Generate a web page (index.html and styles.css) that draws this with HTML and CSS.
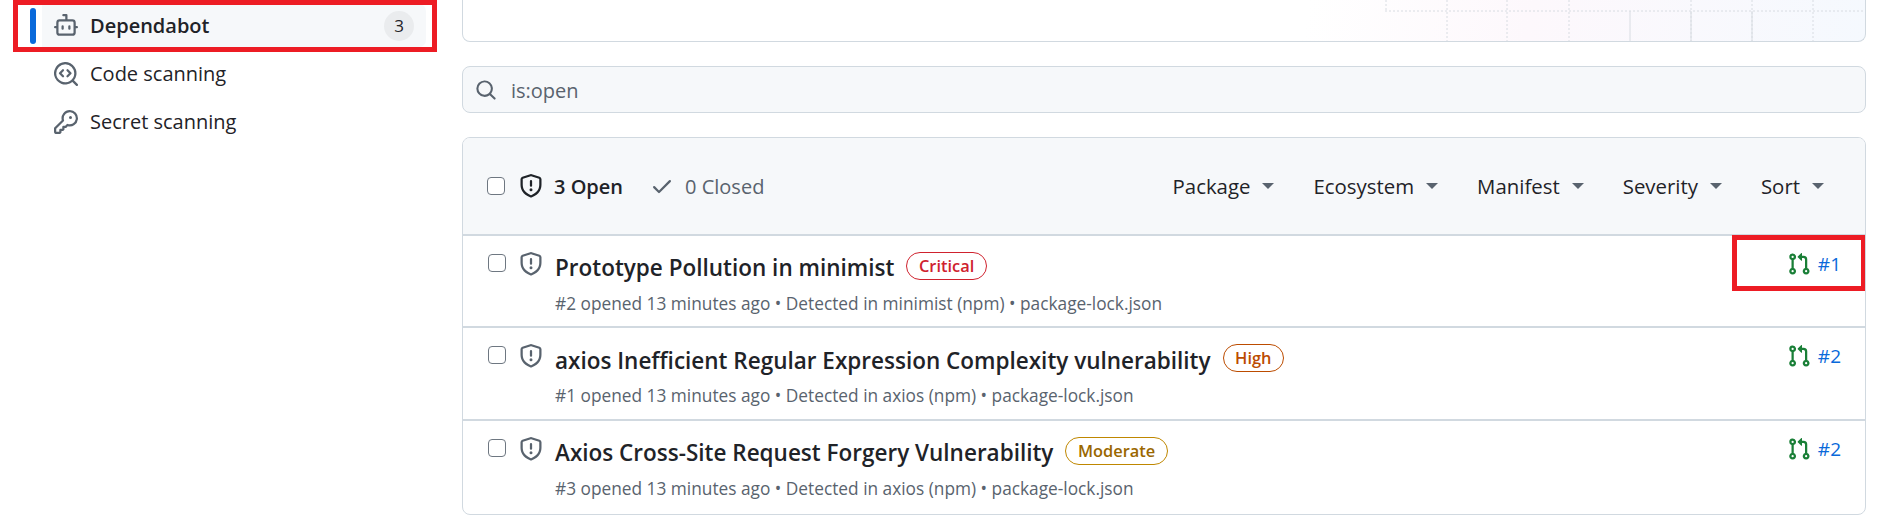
FILE: index.html
```html
<!DOCTYPE html>
<html>
<head>
	<title>Dependabot alerts</title>
	<link rel="stylesheet" href="styles.css">
</head>
<body>
	<svg class="defs" width="0" height="0">
		<symbol id="i-bot" viewBox="0 0 16 16"><path d="M5.75 7.5a.75.75 0 0 1 .75.75v1.5a.75.75 0 0 1-1.5 0v-1.5a.75.75 0 0 1 .75-.75Zm5.25.75a.75.75 0 0 0-1.5 0v1.5a.75.75 0 0 0 1.5 0v-1.5Z"/><path d="M6.25 0h2A.75.75 0 0 1 9 .75V3.5h3.25a2.25 2.25 0 0 1 2.25 2.25V8h.75a.75.75 0 0 1 0 1.5h-.75v2.75a2.25 2.25 0 0 1-2.25 2.25h-8.5a2.25 2.25 0 0 1-2.25-2.25V9.5H.75a.75.75 0 0 1 0-1.5h.75V5.75A2.25 2.25 0 0 1 3.75 3.5H7.5v-2H6.25a.75.75 0 0 1 0-1.5ZM3 5.75v6.5c0 .414.336.75.75.75h8.5a.75.75 0 0 0 .75-.75v-6.5a.75.75 0 0 0-.75-.75h-8.5a.75.75 0 0 0-.75.75Z"/></symbol>
		<symbol id="i-scan" viewBox="0 0 16 16"><path d="M8.47 4.97a.75.75 0 0 0 0 1.06L9.94 7.5 8.47 8.97a.75.75 0 1 0 1.06 1.06l2-2a.75.75 0 0 0 0-1.06l-2-2a.75.75 0 0 0-1.06 0ZM6.53 6.03a.75.75 0 0 0-1.06-1.06l-2 2a.75.75 0 0 0 0 1.06l2 2a.75.75 0 1 0 1.06-1.06L5.06 7.5l1.47-1.47Z"/><path d="M12.246 13.307a7.501 7.501 0 1 1 1.06-1.06l2.474 2.473a.749.749 0 0 1-.326 1.275.749.749 0 0 1-.734-.215ZM1.5 7.5a6.002 6.002 0 0 0 3.27 5.345A5.999 5.999 0 0 0 13.5 7.5a6 6 0 0 0-12 0Z"/></symbol>
		<symbol id="i-key" viewBox="0 0 16 16"><path d="M10.5 0a5.499 5.499 0 1 1-1.288 10.848l-.932.932a.749.749 0 0 1-.53.22H7v.75a.749.749 0 0 1-.22.53l-.5.5a.749.749 0 0 1-.53.22H5v.75a.749.749 0 0 1-.22.53l-.5.5a.749.749 0 0 1-.53.22h-2A1.75 1.75 0 0 1 0 14.25v-2c0-.199.079-.389.22-.53l4.932-4.932A5.5 5.5 0 0 1 10.5 0Zm-4 5.5c-.001.431.069.86.205 1.269a.75.75 0 0 1-.181.768L1.5 12.56v1.69c0 .138.112.25.25.25h1.69l.06-.06v-1.19a.75.75 0 0 1 .75-.75h1.19l.06-.06v-1.19a.75.75 0 0 1 .75-.75h1.19l1.023-1.025a.75.75 0 0 1 .768-.18A4 4 0 1 0 6.5 5.5ZM11 6a1 1 0 1 1 0-2 1 1 0 0 1 0 2Z"/></symbol>
		<symbol id="i-search" viewBox="0 0 16 16"><path d="M10.68 11.74a6 6 0 0 1-7.922-8.982 6 6 0 0 1 8.982 7.922l3.04 3.04a.749.749 0 0 1-.326 1.275.749.749 0 0 1-.734-.215ZM11.5 7a4.499 4.499 0 1 0-8.997 0A4.499 4.499 0 0 0 11.5 7Z"/></symbol>
		<symbol id="i-shield" viewBox="0 0 16 16"><path d="M7.467.133a1.748 1.748 0 0 1 1.066 0l5.25 1.68A1.75 1.75 0 0 1 15 3.48V7c0 1.566-.32 3.182-1.303 4.682-.983 1.498-2.585 2.813-5.032 3.855a1.697 1.697 0 0 1-1.33 0c-2.447-1.042-4.049-2.357-5.032-3.855C1.32 10.182 1 8.566 1 7V3.48a1.75 1.75 0 0 1 1.217-1.667Zm.61 1.429a.25.25 0 0 0-.153 0l-5.25 1.68a.25.25 0 0 0-.174.238V7c0 1.358.275 2.666 1.057 3.86.784 1.194 2.121 2.34 4.366 3.297a.196.196 0 0 0 .154 0c2.245-.956 3.582-2.104 4.366-3.298C13.225 9.666 13.5 8.36 13.5 7V3.48a.251.251 0 0 0-.174-.237l-5.25-1.68ZM8.75 4.75v3a.75.75 0 0 1-1.5 0v-3a.75.75 0 0 1 1.5 0ZM9 10.5a1 1 0 1 1-2 0 1 1 0 0 1 2 0Z"/></symbol>
		<symbol id="i-check" viewBox="0 0 16 16"><path d="M13.78 4.22a.75.75 0 0 1 0 1.06l-7.25 7.25a.75.75 0 0 1-1.06 0L2.22 9.28a.751.751 0 0 1 .018-1.042.751.751 0 0 1 1.042-.018L6 10.94l6.72-6.72a.75.75 0 0 1 1.06 0Z"/></symbol>
		<symbol id="i-pr" viewBox="0 0 16 16"><path d="M1.5 3.25a2.25 2.25 0 1 1 3 2.122v5.256a2.251 2.251 0 1 1-1.5 0V5.372A2.25 2.25 0 0 1 1.5 3.25Zm5.677-.177L9.573.677A.25.25 0 0 1 10 .854V2.5h1A2.5 2.5 0 0 1 13.5 5v5.628a2.251 2.251 0 1 1-1.5 0V5a1 1 0 0 0-1-1h-1v1.646a.25.25 0 0 1-.427.177L7.177 3.427a.25.25 0 0 1 0-.354ZM3.75 2.5a.75.75 0 1 0 0 1.5.75.75 0 0 0 0-1.5Zm0 9.5a.75.75 0 1 0 0 1.5.75.75 0 0 0 0-1.5Zm8.25.75a.75.75 0 1 0 1.5 0 .75.75 0 0 0-1.5 0Z"/></symbol>
	</svg>

	<div class="page">
		<nav class="sidebar">
			<div class="nav-item active">
				<span class="nav-bar"></span>
				<svg class="icon nav-icon"><use href="#i-bot"/></svg>
				<span class="nav-label">Dependabot</span>
				<span class="count">3</span>
			</div>
			<div class="nav-item">
				<span class="nav-bar"></span>
				<svg class="icon nav-icon"><use href="#i-scan"/></svg>
				<span class="nav-label">Code scanning</span>
			</div>
			<div class="nav-item">
				<span class="nav-bar"></span>
				<svg class="icon nav-icon"><use href="#i-key"/></svg>
				<span class="nav-label">Secret scanning</span>
			</div>
			<div class="mark mark-nav"></div>
		</nav>

		<main class="content">
			<div class="promo">
				<svg class="promo-grid" width="480" height="41">
					<path class="grid-dots" d="M0 11H478M1 0V11M62 0V41M122 0V41M184 0V41M306 0V41M367 0V41M428 0V41"/>
					<path class="grid-solid" d="M245 11V41M306 11V41M367 11V41"/>
				</svg>
			</div>

			<div class="search">
				<svg class="icon search-icon"><use href="#i-search"/></svg>
				<span>is:open</span>
			</div>

			<div class="alerts">
				<div class="alerts-head">
					<span class="box"></span>
					<svg class="icon shield head-shield"><use href="#i-shield"/></svg>
					<span class="open-count">3 Open</span>
					<svg class="icon check"><use href="#i-check"/></svg>
					<span class="closed-count">0 Closed</span>
					<div class="filters">
						<span class="filter">Package<i class="caret"></i></span>
						<span class="filter">Ecosystem<i class="caret"></i></span>
						<span class="filter">Manifest<i class="caret"></i></span>
						<span class="filter">Severity<i class="caret"></i></span>
						<span class="filter">Sort<i class="caret"></i></span>
					</div>
				</div>

				<div class="alert">
					<span class="box"></span>
					<svg class="icon shield"><use href="#i-shield"/></svg>
					<div class="alert-body">
						<div class="alert-title">Prototype Pollution in minimist <span class="label critical">Critical</span></div>
						<div class="alert-meta">#2 opened 13 minutes ago • Detected in minimist (npm) • package-lock.json</div>
					</div>
					<div class="pr"><svg class="icon pr-icon"><use href="#i-pr"/></svg><span>#1</span></div>
					<div class="mark mark-pr"></div>
				</div>

				<div class="alert">
					<span class="box"></span>
					<svg class="icon shield"><use href="#i-shield"/></svg>
					<div class="alert-body">
						<div class="alert-title">axios Inefficient Regular Expression Complexity vulnerability <span class="label high">High</span></div>
						<div class="alert-meta">#1 opened 13 minutes ago • Detected in axios (npm) • package-lock.json</div>
					</div>
					<div class="pr"><svg class="icon pr-icon"><use href="#i-pr"/></svg><span>#2</span></div>
				</div>

				<div class="alert">
					<span class="box"></span>
					<svg class="icon shield"><use href="#i-shield"/></svg>
					<div class="alert-body">
						<div class="alert-title">Axios Cross-Site Request Forgery Vulnerability <span class="label moderate">Moderate</span></div>
						<div class="alert-meta">#3 opened 13 minutes ago • Detected in axios (npm) • package-lock.json</div>
					</div>
					<div class="pr"><svg class="icon pr-icon"><use href="#i-pr"/></svg><span>#2</span></div>
				</div>
			</div>
		</main>
	</div>
</body>
</html>
```
FILE: styles.css
```css
* {
	box-sizing: border-box;
}

body {
	background-color: #fff;
	color: #1f2328;
	font-family: "Open Sans", "Noto Sans", sans-serif;
	font-size: 20px;
	margin: 0;
	overflow: hidden;
}

.defs {
	position: absolute;
}

.icon {
	display: block;
	fill: currentColor;
	flex: none;
}

.page {
	display: grid;
	grid-template-columns: 462px 1404px;
	height: 520px;
}

/* sidebar */
.sidebar {
	padding: 4px 36px 0 30px;
	position: relative;
}

.nav-item {
	align-items: center;
	border-radius: 7px;
	display: flex;
	height: 43px;
	margin-bottom: 5px;
}

.nav-bar {
	border-radius: 4px;
	flex: none;
	height: 36px;
	margin-right: 6px;
	width: 6px;
}

.nav-item.active .nav-bar {
	background-color: #0969da;
}

.nav-icon {
	color: #59636e;
	height: 24px;
	margin: 0 12px 0 12px;
	width: 24px;
}

.nav-label {
	flex: 1;
}

.nav-item.active {
	background: linear-gradient(to right, #fff 12px, #f6f8fa 12px);
}

.nav-item.active .nav-label {
	font-weight: 600;
}

.count {
	background-color: #eaecee;
	border-radius: 15px;
	font-size: 17px;
	height: 30px;
	line-height: 30px;
	margin-right: 12px;
	text-align: center;
	width: 30px;
}

.mark {
	border: 5px solid #ed1c24;
	pointer-events: none;
	position: absolute;
}

.mark-nav {
	height: 52px;
	left: 13px;
	top: 0;
	width: 424px;
}

/* content */
.promo {
	background: linear-gradient(100deg, #fff 60%, #fdf8fc 76%, #f5f9fe 100%);
	border: 1px solid #d1d9e0;
	border-radius: 0 0 8px 8px;
	border-top: none;
	height: 42px;
	overflow: hidden;
	position: relative;
}

.promo-grid {
	position: absolute;
	right: 0;
	top: 0;
}

.promo-grid path {
	fill: none;
	stroke: #d8dce2;
}

.grid-dots {
	stroke-dasharray: 2 2;
}

.search {
	align-items: center;
	background-color: #f6f8fa;
	border: 1px solid #d1d9e0;
	border-radius: 8px;
	color: #59636e;
	display: flex;
	height: 47px;
	margin: 24px 0;
	padding: 2px 0 0 12px;
}

.search-icon {
	height: 22px;
	margin-right: 14px;
	margin-top: -2px;
	width: 22px;
}

.alerts {
	border: 1px solid #d1d9e0;
	border-radius: 8px;
	height: 378px;
	overflow: hidden;
}

.alerts-head {
	align-items: center;
	background-color: #f6f8fa;
	border-bottom: 2px solid #d1d9e0;
	display: flex;
	height: 97.5px;
	padding: 1px 41px 0 24px;
}

.box {
	background-color: #fff;
	border: 1px solid #6e7781;
	border-radius: 4px;
	display: block;
	flex: none;
	height: 18px;
	width: 18px;
}

.shield {
	color: #59636e;
	height: 24px;
	margin-left: 13px;
	margin-right: 12px;
	width: 24px;
}

.head-shield {
	color: #1f2328;
	margin-left: 14px;
	margin-right: 11px;
}

.open-count {
	font-weight: 600;
}

.check {
	color: #59636e;
	height: 24px;
	margin: 0 11px 0 27px;
	width: 24px;
}

.closed-count {
	color: #59636e;
}

.filters {
	display: flex;
	font-size: 20.4px;
	gap: 39px;
	margin-left: auto;
}

.filter {
	align-items: center;
	display: flex;
}

.caret {
	border-left: 6px solid transparent;
	border-right: 6px solid transparent;
	border-top: 6px solid #59636e;
	margin-left: 12px;
}

.alert {
	align-items: flex-start;
	border-bottom: 2px solid #d1d9e0;
	display: flex;
	height: 92.5px;
	padding: 16px 24px 0 25px;
	position: relative;
}

.alert:last-child {
	border-bottom: none;
}

.alert .box {
	margin-top: 2px;
}

.alert-body {
	flex: 1;
}

.alert-title {
	align-items: center;
	display: flex;
	font-size: 22.5px;
	font-weight: 600;
	gap: 12px;
	height: 32px;
}

.label {
	border: 1px solid;
	border-radius: 14px;
	font-size: 16.4px;
	font-weight: 600;
	height: 28px;
	line-height: 25px;
	margin-top: -4px;
	padding: 0 11.5px;
}

.critical {
	border-color: #cf222e;
	color: #cf222e;
}

.high {
	border-color: #bc4c00;
	color: #bc4c00;
}

.moderate {
	border-color: #bf8700;
	color: #9a6700;
}

.alert-meta {
	color: #59636e;
	font-size: 17.3px;
	margin-top: 8px;
}

.pr {
	align-items: center;
	color: #0969da;
	display: flex;
	font-size: 19px;
	gap: 7px;
	height: 24px;
}

.pr-icon {
	color: #1a7f37;
	height: 24px;
	width: 24px;
}

.mark-pr {
	height: 56px;
	right: -1px;
	top: -1px;
	width: 134px;
}
```
